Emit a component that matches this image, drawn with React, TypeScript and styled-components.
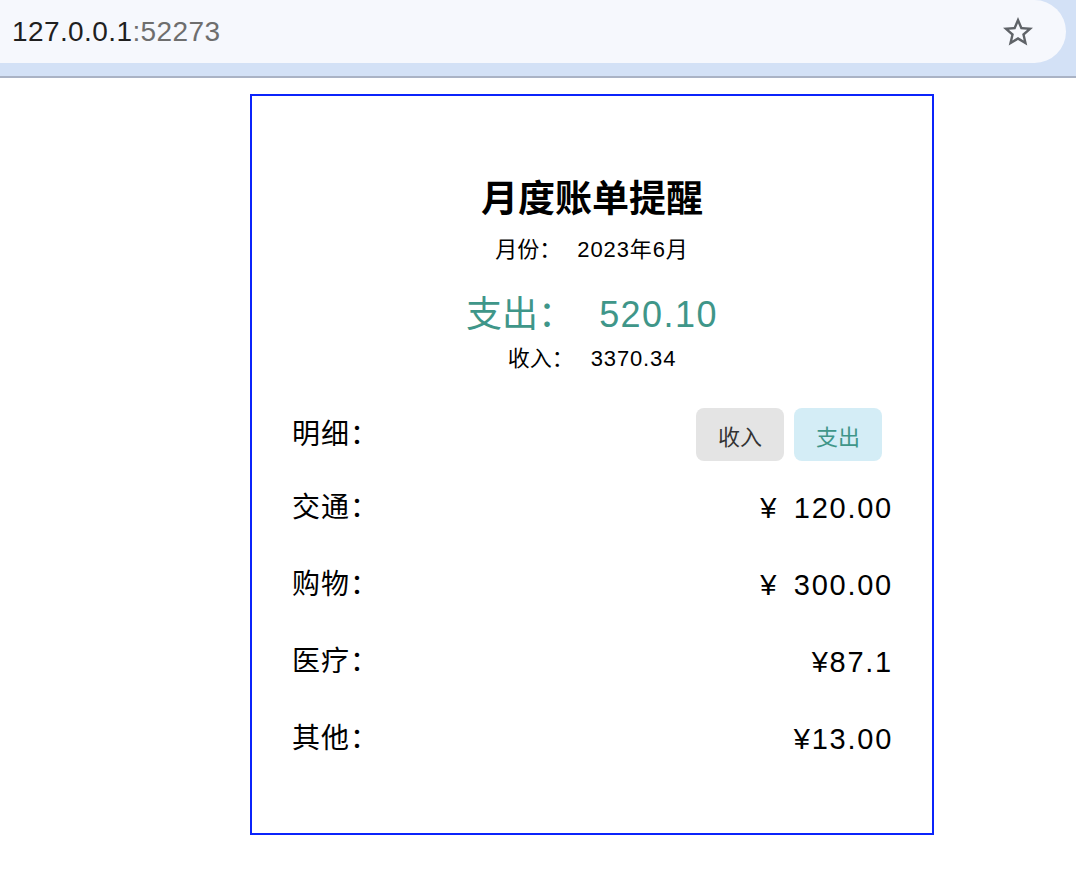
import React from 'react';
import styled, { createGlobalStyle } from 'styled-components';

const FONT = `"Liberation Sans", "Noto Sans CJK SC", sans-serif`;

const GlobalStyle = createGlobalStyle`
  html, body {
    margin: 0;
    padding: 0;
    background: #ffffff;
    font-family: ${FONT};
  }
`;

type Item = {
  label: string;
  amount: string;
};

const ITEMS: Item[] = [
  { label: '交通：', amount: '¥ 120.00' },
  { label: '购物：', amount: '¥ 300.00' },
  { label: '医疗：', amount: '¥87.1' },
  { label: '其他：', amount: '¥13.00' }
];

const Chrome = styled.div`
  height: 76px;
  background: #d3e1f6;
  border-bottom: 2px solid #aab3c5;
`;

const AddressField = styled.div`
  width: 1066px;
  height: 63px;
  box-sizing: border-box;
  padding: 0 30px 0 12px;
  background: #f6f8fd;
  border-radius: 0 32px 32px 0;
  display: flex;
  align-items: center;
  justify-content: space-between;
`;

const Url = styled.span`
  font-size: 28px;
  color: #1f1f1f;
  letter-spacing: 0.4px;
`;

const Port = styled.span`
  color: #6e6e6e;
`;

const StarIcon = () => (
  <svg width="36" height="36" viewBox="0 0 24 24" fill="#5f6368">
    <path d="M22 9.24l-7.19-.62L12 2 9.19 8.63 2 9.24l5.46 4.73L5.82 21 12 17.27 18.18 21l-1.63-7.03L22 9.24zM12 15.4l-3.76 2.27 1-4.28-3.32-2.88 4.38-.38L12 6.1l1.71 4.04 4.38.38-3.32 2.88 1 4.28L12 15.4z" />
  </svg>
);

const Card = styled.div`
  width: 684px;
  height: 741px;
  box-sizing: border-box;
  margin: 16px 0 0 250px;
  padding: 79px 40px 0 40px;
  border: 2px solid #0b24fb;
  display: flex;
  flex-direction: column;
`;

const Title = styled.h2`
  margin: 0;
  font-size: 37px;
  line-height: 50px;
  font-weight: 700;
  text-align: center;
  color: #000;
`;

const SubLine = styled.div<{ top: number }>`
  margin-top: ${props => props.top}px;
  font-size: 22px;
  line-height: 30px;
  text-align: center;
  color: #000;
`;

const Num = styled.span<{ gap: number }>`
  margin-left: ${props => props.gap}px;
  letter-spacing: 0.04em;
`;

const Spend = styled.div`
  margin-top: 27px;
  font-size: 36px;
  line-height: 46px;
  text-align: center;
  color: #3f9689;
`;

const DetailHeader = styled.div`
  margin-top: 34px;
  display: flex;
  align-items: center;
  justify-content: space-between;
`;

const Label = styled.span`
  font-size: 28px;
  line-height: 40px;
  color: #000;
  letter-spacing: 1px;
`;

const Toggle = styled.div`
  display: flex;
  gap: 10px;
  margin-right: 10px;
`;

const ToggleButton = styled.button<{ active?: boolean }>`
  width: 88px;
  height: 53px;
  border: none;
  border-radius: 8px;
  font-family: ${FONT};
  font-size: 22px;
  cursor: pointer;
  background: ${props => (props.active ? '#d4edf6' : '#e4e4e4')};
  color: ${props => (props.active ? '#3f9689' : '#333')};
`;

const List = styled.div`
  margin-top: 27px;
  display: flex;
  flex-direction: column;
  gap: 37px;
`;

const Row = styled.div`
  display: flex;
  justify-content: space-between;
  align-items: center;
`;

const Amount = styled.span`
  font-size: 29px;
  line-height: 40px;
  color: #000;
  white-space: pre;
  letter-spacing: 0.06em;
  word-spacing: 6px;
  margin-right: -1px;
`;

export default function App() {
  return (
    <>
      <GlobalStyle />
      <Chrome>
        <AddressField>
          <Url>
            127.0.0.1<Port>:52273</Port>
          </Url>
          <StarIcon />
        </AddressField>
      </Chrome>
      <Card>
        <Title>月度账单提醒</Title>
        <SubLine top={10}>
          月份：<Num gap={16}>2023年6月</Num>
        </SubLine>
        <Spend>
          支出：<Num gap={25}>520.10</Num>
        </Spend>
        <SubLine top={6}>
          收入：<Num gap={17}>3370.34</Num>
        </SubLine>
        <DetailHeader>
          <Label>明细：</Label>
          <Toggle>
            <ToggleButton>收入</ToggleButton>
            <ToggleButton active>支出</ToggleButton>
          </Toggle>
        </DetailHeader>
        <List>
          {ITEMS.map(item => (
            <Row key={item.label}>
              <Label>{item.label}</Label>
              <Amount>{item.amount}</Amount>
            </Row>
          ))}
        </List>
      </Card>
    </>
  );
}
